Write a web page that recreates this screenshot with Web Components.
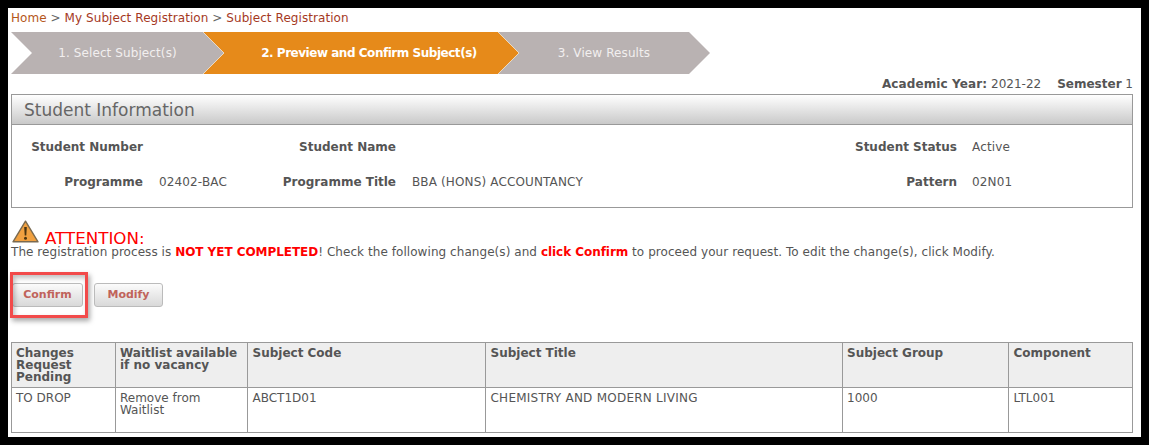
<!DOCTYPE html>
<html><head><meta charset="utf-8"><title>Subject Registration</title>
<style>
html,body{margin:0;padding:0;background:#000;height:445px;overflow:hidden}
body{padding:8px;box-sizing:border-box;font-family:"DejaVu Sans",Verdana,sans-serif;font-size:12px;color:#555}
</style></head><body>
<reg-page>
  <reg-breadcrumb></reg-breadcrumb>
  <reg-steps>
    <reg-step pad="0" z="3" w="213">1. Select Subject(s)</reg-step>
    <reg-step pad="16" z="2" w="316" active>2. Preview and Confirm Subject(s)</reg-step>
    <reg-step pad="0" z="1" w="212" last>3. View Results</reg-step>
  </reg-steps>
  <reg-term></reg-term>
  <reg-panel title="Student Information">
    <reg-field label="Student Number"></reg-field>
    <reg-field label="Student Name"></reg-field>
    <reg-field label="Student Status" style="--vx:-1px">Active</reg-field>
    <reg-field label="Programme">02402-BAC</reg-field>
    <reg-field label="Programme Title">BBA (HONS) ACCOUNTANCY</reg-field>
    <reg-field label="Pattern" style="--vx:-1px">02N01</reg-field>
  </reg-panel>
  <reg-alert></reg-alert>
  <reg-actions>
    <reg-button highlighted>Confirm</reg-button>
    <reg-button>Modify</reg-button>
  </reg-actions>
  <reg-table></reg-table>
</reg-page>
<script>
function def(name, css, html, init){
  customElements.define(name, class extends HTMLElement{
    connectedCallback(){
      if(this.shadowRoot) return;
      const r=this.attachShadow({mode:'open'});
      r.innerHTML='<style>'+css+'</style>'+(typeof html==='function'?html(this):html);
      if(init) init(this,r);
    }
  });
}
def('reg-page',':host{display:flex;flex-direction:column;background:#fff;width:1133px;height:429px;box-sizing:border-box;padding:0 8px 0 3px;overflow:hidden}','<slot></slot>');
def('reg-breadcrumb',':host{display:block;height:24px;line-height:20px;letter-spacing:.065px;color:#a5391f;white-space:nowrap}.h{color:#b5561a}.s{color:#666}',
 '<span class="h">Home</span> <span class="s">&gt;</span> <span>My Subject Registration</span> <span class="s">&gt;</span> <span>Subject Registration</span>');
def('reg-steps',':host{display:flex;height:42px}','<slot></slot>');
def('reg-step',`:host{display:block;position:relative;height:42px;margin-left:-21px;flex:none}
:host(:first-child){margin-left:0}
svg{position:absolute;left:0;top:0}
.t{position:relative;display:flex;align-items:center;justify-content:center;height:42px;color:#f2efef;white-space:nowrap;letter-spacing:.1px}
:host([active]) .t{color:#fff;font-weight:bold;letter-spacing:-.47px}`,
 h=>{const w=+h.getAttribute('w'),a=h.hasAttribute('active'),f=a?'#e68a1a':'#b9b2b2',e=w-21,l=h.hasAttribute('last');
  return `<svg width="${w}" height="42" viewBox="0 0 ${w} 42"><polygon points="0,0 ${e},0 ${w},21 ${e},42 0,42 21,21" fill="${f}"/>${l?'':`<polyline points="${e},0 ${w},21 ${e},42" fill="none" stroke="#ecd9c0" stroke-width="1"/>`}</svg><div class="t" style="padding-left:${h.getAttribute('pad')}px"><slot></slot></div>`},
 h=>{h.style.width=h.getAttribute('w')+'px';h.style.zIndex=h.getAttribute('z')});
def('reg-term',':host{display:flex;justify-content:flex-end;gap:16px;height:20px;line-height:21px;white-space:nowrap}b{color:#555}.y{letter-spacing:.12px}',
 '<span><b class="y">Academic Year:</b> 2021-22</span><span><b>Semester</b> 1</span>');
def('reg-panel',`:host{display:block;border:1px solid #999;height:114px;box-sizing:border-box}
.h{height:30px;box-sizing:border-box;border-bottom:1px solid #999;background:linear-gradient(#fff,#c9c9c9);padding-left:12px;font-size:17px;line-height:31px;color:#666}
.g{display:grid;grid-template-columns:131px 80px 141px 345px 184px auto;column-gap:16px;grid-auto-rows:35px;padding-top:5px}`,
 h=>`<div class="h">${h.getAttribute('title')}</div><div class="g"><slot></slot></div>`);
def('reg-field',':host{display:contents}.l{font-weight:bold;text-align:right;line-height:35px;white-space:nowrap}.v{line-height:35px;white-space:nowrap;letter-spacing:.14px;margin-left:var(--vx,0)}',
 h=>`<div class="l">${h.getAttribute('label')}</div><div class="v"><slot></slot></div>`);
def('reg-alert',`:host{display:block;margin-top:12px;white-space:nowrap}
.a{display:flex;align-items:flex-end;height:25px}
svg{flex:none;display:block;margin:0 6px 2px 1px}
.tt{font-size:16.7px;line-height:13px;color:#f00}
.m{line-height:15px;letter-spacing:.06px}b{color:#f00;letter-spacing:-.05px}`,
 `<div class="a"><svg width="27" height="23" viewBox="0 0 27 23"><path d="M13.5 1.2 L26 21.8 H1 Z" fill="#f0a040" stroke="#7a6a50" stroke-width="1.4" stroke-linejoin="round"/><path d="M12.2 7 h2.6 l-.5 8.5 h-1.6 Z" fill="#4a3410"/><circle cx="13.5" cy="18.3" r="1.5" fill="#4a3410"/></svg><span class="tt">ATTENTION:</span></div>
 <div class="m">The registration process is <b>NOT YET COMPLETED</b>! Check the following change(s) and <b>click Confirm</b> to proceed your request. To edit the change(s), click Modify.</div>`);
def('reg-actions',':host{display:flex;gap:11px;margin-top:23px;padding-left:1px}','<slot></slot>');
def('reg-button',`:host{display:block;position:relative}
.b{display:block;box-sizing:border-box;width:69px;height:24px;border:1px solid #bbb;border-radius:3px;background:linear-gradient(#fbfbfb,#d9d9d9);color:#c0635b;font:bold 11px/22px "DejaVu Sans",sans-serif;text-align:center}
:host([highlighted]) .b{width:71px}
.r{display:none;position:absolute;left:-2px;top:-11px;width:78px;height:46px;box-sizing:border-box;border:3px solid #f24a4a;box-shadow:2px 3px 5px rgba(0,0,0,.35), inset 2px 3px 5px rgba(0,0,0,.25)}
:host([highlighted]) .r{display:block}`,
 '<div class="b"><slot></slot></div><div class="r"></div>');
def('reg-table',`:host{display:block;margin-top:35px}
table{border-collapse:collapse;table-layout:fixed;width:1121px}
th,td{border:1px solid #999;vertical-align:top;text-align:left;padding:4px;line-height:12px;height:45px;box-sizing:border-box;font-size:12px}
th:nth-child(3),td:nth-child(3),th:nth-child(4),td:nth-child(4),th:nth-child(6),td:nth-child(6){padding-left:4.5px}
th{background:#eee;color:#555}
.w{letter-spacing:.24px}`,
 `<table><colgroup><col style="width:104px"><col style="width:132px"><col style="width:238px"><col style="width:357px"><col style="width:166px"><col style="width:124px"></colgroup>
 <thead><tr><th>Changes Request Pending</th><th>Waitlist available if no vacancy</th><th>Subject Code</th><th>Subject Title</th><th>Subject Group</th><th>Component</th></tr></thead>
 <tbody><tr><td>TO DROP</td><td>Remove from Waitlist</td><td>ABCT1D01</td><td class="w">CHEMISTRY AND MODERN LIVING</td><td>1000</td><td>LTL001</td></tr></tbody></table>`);
</script>
</body></html>
